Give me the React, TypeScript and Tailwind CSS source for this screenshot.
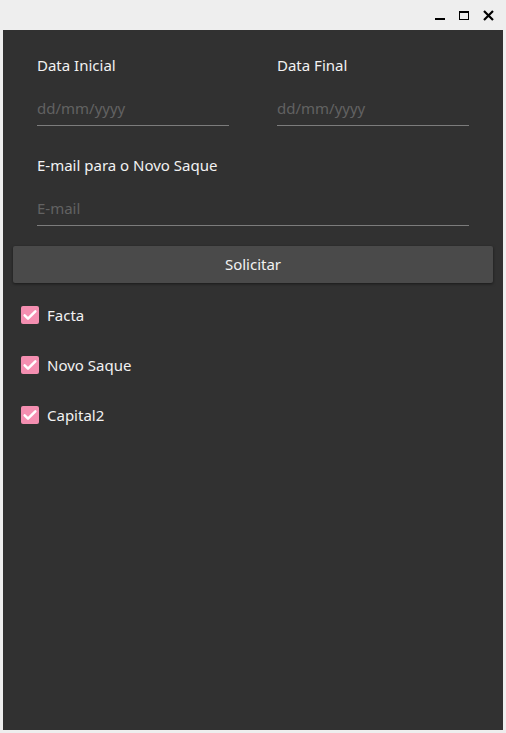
import React from "react";

const items = ["Facta", "Novo Saque", "Capital2"];

function CheckRow({ label }: { label: string }) {
  return (
    <label className="flex items-center h-[50px] pl-[18px]">
      <span className="w-[18px] h-[18px] rounded-[2px] bg-[#f48fb1] flex items-center justify-center">
        <svg width="16" height="16" viewBox="0 0 24 24">
          <path d="M4 12.5l5 5L20 6.5" fill="none" stroke="#ffffff" strokeWidth="3.8" strokeLinecap="round" strokeLinejoin="round" />
        </svg>
      </span>
      <span className="ml-[8px] text-[15px] text-[#f2f2f2]">{label}</span>
    </label>
  );
}

function Field({ label, placeholder, className }: { label: string; placeholder: string; className?: string }) {
  return (
    <div className={`flex flex-col min-w-0 ${className ?? ""}`}>
      <span className="text-[15px] leading-[20px] text-[#f2f2f2]">{label}</span>
      <input
        placeholder={placeholder}
        className="mt-[18px] w-full min-w-0 h-[33px] pb-[3px] bg-transparent border-b border-[#7c7c7c] text-[15px] text-white placeholder:text-[#626262] outline-none"
      />
    </div>
  );
}

export default function App() {
  return (
    <div className="w-[506px] h-[733px] bg-[#eeeeee] flex flex-col" style={{ fontFamily: '"Noto Sans", sans-serif' }}>
      <div className="h-[30px] flex items-center justify-end pr-[12px] gap-[14px]">
        <span className="w-[10px] h-[10px] flex items-end"><span className="w-[10px] h-[2.5px] bg-black" /></span>
        <span className="w-[10px] h-[9px] border border-black border-t-2" />
        <svg width="11" height="11" viewBox="0 0 11 11">
          <path d="M1 1L10 10M10 1L1 10" stroke="#000" strokeWidth="2.2" />
        </svg>
      </div>
      <div className="mx-[3px] h-[700px] bg-[#313131] flex flex-col">
        <div className="px-[34px] pt-[25px]">
          <div className="flex gap-[48px]">
            <Field label="Data Inicial" placeholder="dd/mm/yyyy" className="flex-1" />
            <Field label="Data Final" placeholder="dd/mm/yyyy" className="flex-1" />
          </div>
          <Field label="E-mail para o Novo Saque" placeholder="E-mail" className="mt-[29px]" />
        </div>
        <button className="mx-[10px] mt-[20px] h-[37px] rounded-[2px] bg-[#4a4a4a] text-[15px] text-[#f2f2f2] shadow-[0_1px_3px_rgba(0,0,0,0.5)]">
          Solicitar
        </button>
        <div className="mt-[7px] flex flex-col">
          {items.map((it) => (
            <CheckRow key={it} label={it} />
          ))}
        </div>
      </div>
    </div>
  );
}
